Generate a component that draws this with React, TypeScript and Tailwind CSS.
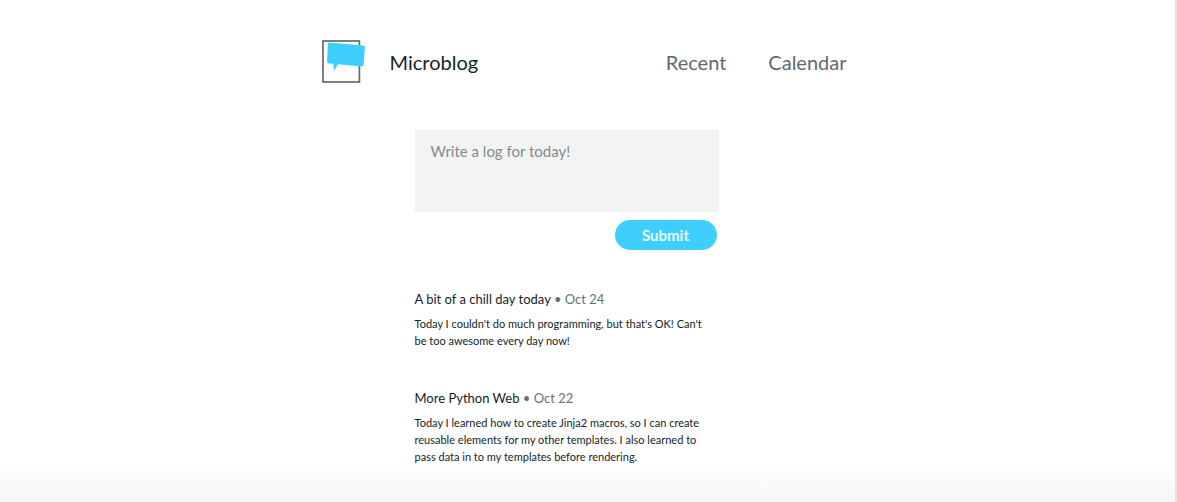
type Entry = { title: string; date: string; dateTime: string; body: string };

const entries: Entry[] = [
  {
    title: "A bit of a chill day today",
    date: "Oct 24",
    dateTime: "10-24",
    body: "Today I couldn't do much programming, but that's OK! Can't be too awesome every day now!",
  },
  {
    title: "More Python Web",
    date: "Oct 22",
    dateTime: "10-22",
    body: "Today I learned how to create Jinja2 macros, so I can create reusable elements for my other templates. I also learned to pass data in to my templates before rendering.",
  },
];

function Logo() {
  return (
    <svg width="44" height="44" viewBox="0 0 44 44" aria-hidden="true">
      <rect x="1" y="1" width="36.4" height="41" fill="#fff" stroke="#666a6b" strokeWidth="1.7" />
      <path
        d="M7.6 2.4 L41.2 5.5 Q43 5.7 42.8 7.4 L41.6 24.8 Q41.4 26.6 39.6 26.4 L16.2 24.3 L12 30.8 L11.4 23.8 L6.6 23.4 Q4.9 23.2 5 21.6 L5.9 3.8 Q6 2.3 7.6 2.4 Z"
        fill="#3fcfff"
      />
    </svg>
  );
}

function Post({ entry }: { entry: Entry }) {
  return (
    <article>
      <h2 className="text-[13px] leading-5">
        {entry.title}{" "}
        <span className="text-[#687273]">
          • <time dateTime={entry.dateTime}>{entry.date}</time>
        </span>
      </h2>
      <p className="mt-1.5 pr-2 text-[11px] leading-[17px]">{entry.body}</p>
    </article>
  );
}

export default function App() {
  return (
    <div className="min-h-screen border-r-2 border-[#e3e3e3] bg-[linear-gradient(to_top,#f6f6f6,#ffffff_40px)] font-['Lato',sans-serif] text-[#14252a]">
      <div className="mx-auto max-w-[532px] pt-10">
        <header className="flex items-center">
          <Logo />
          <h1 className="ml-6 text-xl">Microblog</h1>
          <nav className="mr-[7px] ml-auto flex gap-[42px] text-xl text-[#5d6b6e]">
            <a href="#recent">Recent</a>
            <a href="#calendar">Calendar</a>
          </nav>
        </header>
        <main className="mt-[46px] ml-[93px] max-w-[304px] pb-8">
          <form className="flex flex-col items-end" onSubmit={(e) => e.preventDefault()}>
            <textarea
              aria-label="Log entry"
              placeholder="Write a log for today!"
              className="h-[82px] w-full resize-none bg-[#f2f4f4] px-4 py-[11px] text-[15px] leading-5 outline-none placeholder:text-[#858b89]"
            />
            <button type="submit" className="mt-2 mr-0.5 h-[30px] w-[102px] rounded-full bg-[#3fcfff] text-[15px] font-bold text-[#e9fbfb]">
              Submit
            </button>
          </form>
          <section aria-label="Recent entries" className="mt-[39px] flex flex-col gap-[39px]">
            {entries.map((entry) => (
              <Post key={entry.title} entry={entry} />
            ))}
          </section>
        </main>
      </div>
    </div>
  );
}
